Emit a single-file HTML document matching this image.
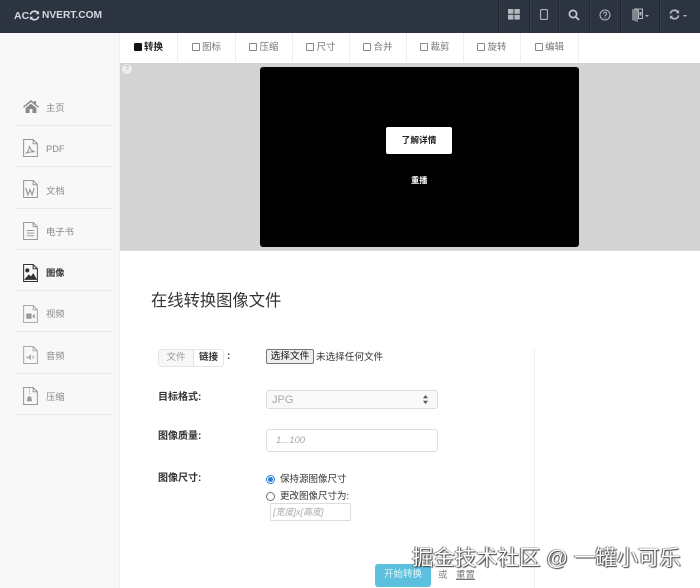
<!DOCTYPE html>
<html lang="zh">
<head>
<meta charset="utf-8">
<title>Aconvert</title>
<style>
html,body{margin:0;padding:0;background:#fff;}
body{width:700px;height:588px;position:relative;overflow:hidden;font-family:"Liberation Sans","Noto Sans CJK SC",sans-serif;color:#333;font-size:10px;}
#wrap{position:absolute;left:0;top:0;width:700px;height:588px;filter:blur(.35px);}
.a{position:absolute;white-space:nowrap;}
#nav{left:0;top:0;width:700px;height:33px;background:#2b3440;}
.sep{position:absolute;top:0;width:1px;height:33px;background:#1f2630;box-shadow:1px 0 0 #343e4b;}
#side{left:0;top:33px;width:120px;height:555px;background:#f8f8f8;border-right:1px solid #eee;box-sizing:border-box;}
.line{position:absolute;left:15px;width:97px;height:1px;background:#e8e8e8;}
.mi{position:absolute;left:46px;font-size:9.3px;color:#888;line-height:12px;}
.ic{position:absolute;left:22px;}
#tabs{left:120px;top:33px;width:580px;height:30px;background:#fff;}
.tab{position:absolute;top:0;height:29px;border-right:1px solid #eee;box-sizing:border-box;font-size:9.5px;color:#777;line-height:29px;text-align:center;}
.tab i{display:inline-block;width:6px;height:6px;border:1px solid #888;border-radius:1px;margin-right:2px;vertical-align:-0.5px;}
.tab.on{color:#222;font-weight:bold;}
.tab.on i{background:#111;border-color:#111;}
#gray{left:120px;top:63px;width:580px;height:188px;background:#d3d3d3;border-bottom:1px solid #ddd;box-sizing:border-box;}
#ad{left:260px;top:67px;width:319px;height:180px;background:#000;border-radius:3px;}
#btn{left:386px;top:127px;width:66px;height:27px;background:#fff;border-radius:2px;color:#222;font-size:8.7px;font-weight:bold;text-align:center;line-height:27px;}
.lb{font-size:10px;color:#333;font-weight:bold;line-height:13px;}
.inp{border:1px solid #ddd;box-sizing:border-box;border-radius:3px;background:#fff;}
</style>
</head>
<body>
<div id="wrap">
<div class="a" id="nav">
  <div class="a" style="left:14px;top:9px;color:#d5d9de;font-size:10.5px;font-weight:bold;line-height:14px;">AC</div>
  <svg class="a" style="left:29px;top:10px" width="11" height="11" viewBox="0 0 12 12" fill="none" stroke="#d5d9de" stroke-width="1.8"><path d="M1.5 5A4.6 4.6 0 0 1 9.8 3.4"/><path d="M10.5 7A4.6 4.600 0 0 1 2.2 8.6"/><path d="M11 1v3.6H7.5z" fill="#d5d9de" stroke="none"/><path d="M1 11V7.4h3.5z" fill="#d5d9de" stroke="none"/></svg>
  <div class="a" style="left:42px;top:9px;color:#d5d9de;font-size:10.2px;font-weight:bold;line-height:14px;">NVERT.COM</div>
  <div class="sep" style="left:498px"></div><div class="sep" style="left:529px"></div><div class="sep" style="left:558px"></div><div class="sep" style="left:589px"></div><div class="sep" style="left:620px"></div><div class="sep" style="left:659px"></div>
  <svg class="a" style="left:508px;top:9px" width="12" height="11" viewBox="0 0 12 11" fill="#b5bac0"><rect x="0" y="0" width="5.4" height="4.8"/><rect x="6.4" y="0" width="5.4" height="4.8"/><rect x="0" y="5.8" width="5.4" height="4.8"/><rect x="6.4" y="5.8" width="5.4" height="4.8"/></svg>
  <svg class="a" style="left:540px;top:9px" width="8" height="11" viewBox="0 0 8 11" fill="none" stroke="#b5bac0" stroke-width="1.1"><rect x=".6" y=".6" width="6.8" height="9.8" rx="1"/></svg>
  <svg class="a" style="left:568px;top:9px" width="12" height="12" viewBox="0 0 12 12" fill="none" stroke="#c5c9ce" stroke-width="1.7"><circle cx="5" cy="5" r="3.6"/><path d="M7.6 7.6L11 11"/></svg>
  <svg class="a" style="left:599px;top:9px" width="12" height="12" viewBox="0 0 12 12" fill="none" stroke="#b5bac0" stroke-width="1"><circle cx="6" cy="6" r="5"/><path d="M4.4 4.8a1.6 1.6 0 1 1 2.4 1.4c-.6.4-.8.6-.8 1.2"/><path d="M6 8.4v1"/></svg>
  <svg class="a" style="left:632px;top:8px" width="11" height="14" viewBox="0 0 11 14" fill="#7f868e"><path d="M0 1l6 1.500V14L0 12z"/><path d="M2 1h8.500v9.500H6.500V2.500z" fill="none" stroke="#b5bac0"/><path d="M7.500 4h2v3.500h-2z" fill="#b5bac0"/></svg>
  <div class="a" style="left:645px;top:15px;width:0;height:0;border:2px solid transparent;border-top-color:#b5bac0;"></div>
  <svg class="a" style="left:669px;top:9px" width="11" height="11" viewBox="0 0 12 12" fill="none" stroke="#b5bac0" stroke-width="1.8"><path d="M1.5 5A4.6 4.6 0 0 1 9.8 3.4"/><path d="M10.5 7A4.6 4.600 0 0 1 2.2 8.6"/><path d="M11 1v3.6H7.5z" fill="#b5bac0" stroke="none"/><path d="M1 11V7.4h3.5z" fill="#b5bac0" stroke="none"/></svg>
  <div class="a" style="left:683px;top:15px;width:0;height:0;border:2px solid transparent;border-top-color:#b5bac0;"></div>
</div>

<div class="a" id="side"></div>
<svg class="a ic" style="top:100px;left:23px" width="16" height="13" viewBox="0 0 16 13" fill="#8a8a8a"><path d="M8 0L0 6.6l1 1L8 2l7 5.6 1-1-3-2.4V1h-2v1.600z"/><path d="M2.600 8L8 3.600 13.400 8v5H9.400V9H6.600v4H2.600z"/></svg>
<div class="a mi" style="top:102px">主页</div><div class="a line" style="top:125px"></div>
<svg class="a ic" style="top:139px" width="17" height="18" viewBox="0 0 16 17" fill="none" stroke="#999"><path d="M1.500.5h9l4 4v12h-13z"/><path d="M10.500.5v4h4"/><path d="M3.500 13.500c2-1 3.500-4.500 3.500-7 .5 3 2 5 5 5.500-3 0-6 .5-8.500 1.500z"/></svg>
<div class="a mi" style="top:143px">PDF</div><div class="a line" style="top:166px"></div>
<svg class="a ic" style="top:180px" width="17" height="18" viewBox="0 0 16 17" fill="none" stroke="#999"><path d="M1.500.5h9l4 4v12h-13z"/><path d="M10.500.5v4h4"/><path d="M3.500 7.500l2 6.500 2-5 2 5 2-6.500" stroke-width="1.100"/></svg>
<div class="a mi" style="top:185px">文档</div><div class="a line" style="top:208px"></div>
<svg class="a ic" style="top:222px" width="17" height="18" viewBox="0 0 16 17" fill="none" stroke="#999"><path d="M1.500.5h9l4 4v12h-13z"/><path d="M10.500.5v4h4"/><path d="M4.500 8h7M4.500 10.500h7M4.500 13h7"/></svg>
<div class="a mi" style="top:226px">电子书</div><div class="a line" style="top:249px"></div>
<svg class="a ic" style="top:264px" width="17" height="18" viewBox="0 0 16 17" fill="none" stroke="#333"><path d="M1.500.5h9l4 4v12h-13z"/><path d="M10.500.5v4h4"/><circle cx="5" cy="6" r="1.500" fill="#333"/><path d="M3 14.500l3.500-4 2 2 2-3 3 5z" fill="#333"/></svg>
<div class="a mi" style="top:267px;color:#333;font-weight:bold">图像</div><div class="a line" style="top:290px"></div>
<svg class="a ic" style="top:305px" width="17" height="18" viewBox="0 0 16 17" fill="none" stroke="#aaa"><path d="M1.500.5h9l4 4v12h-13z"/><path d="M10.500.5v4h4"/><rect x="4" y="8" width="5" height="5" fill="#999" stroke="none"/><path d="M9.500 10.500l2.500-2v4.500z" fill="#999" stroke="none"/></svg>
<div class="a mi" style="top:308px">视频</div><div class="a line" style="top:331px"></div>
<svg class="a ic" style="top:346px" width="17" height="18" viewBox="0 0 16 17" fill="none" stroke="#aaa"><path d="M1.500.5h9l4 4v12h-13z"/><path d="M10.500.5v4h4"/><path d="M4 10h2l2.500-2.500v6L6 11.500H4z" fill="#aaa" stroke="none"/><path d="M10 9c.8 1 .8 2 0 3"/></svg>
<div class="a mi" style="top:350px">音频</div><div class="a line" style="top:373px"></div>
<svg class="a ic" style="top:387px" width="17" height="18" viewBox="0 0 16 17" fill="none" stroke="#999"><path d="M1.500.5h9l4 4v12h-13z"/><path d="M10.500.5v4h4"/><path d="M7 1.500v6" stroke-dasharray="1 1"/><path d="M5.500 9h3l1 4.500h-5z" fill="#999" stroke="none"/></svg>
<div class="a mi" style="top:391px">压缩</div><div class="a line" style="top:414px"></div>

<div class="a" id="tabs">
  <div class="tab on" style="left:0;width:58px"><i></i>转换</div>
  <div class="tab" style="left:58px;width:58px"><i></i>图标</div>
  <div class="tab" style="left:116px;width:57px"><i></i>压缩</div>
  <div class="tab" style="left:173px;width:57px"><i></i>尺寸</div>
  <div class="tab" style="left:230px;width:57px"><i></i>合并</div>
  <div class="tab" style="left:287px;width:57px"><i></i>裁剪</div>
  <div class="tab" style="left:344px;width:57px"><i></i>旋转</div>
  <div class="tab" style="left:401px;width:58px"><i></i>编辑</div>
</div>
<div class="a" id="gray"></div>
<div class="a" style="left:122px;top:64px;width:10px;height:10px;border-radius:50%;background:#eee;color:#aaa;font-size:7px;line-height:10px;text-align:center;">?</div>
<div class="a" id="ad"></div>
<div class="a" id="btn">了解详情</div>
<div class="a" style="left:411px;top:175px;color:#fff;font-size:8.2px;font-weight:bold;line-height:12px;">重播</div>

<div class="a" style="left:151px;top:291px;font-size:16.3px;color:#333;line-height:21px;">在线转换图像文件</div>
<div class="a" style="left:534px;top:350px;width:1px;height:238px;background:#eee;"></div>

<div class="a" style="left:158px;top:349px;width:66px;height:18px;border:1px solid #e5e5e5;box-sizing:border-box;border-radius:3px;background:#fff;"></div>
<div class="a" style="left:159px;top:350px;width:34px;height:16px;background:#f7f7f7;border-right:1px solid #e5e5e5;color:#999;font-size:9.5px;line-height:15px;text-align:center;">文件</div>
<div class="a" style="left:199px;top:351px;color:#333;font-size:9.5px;font-weight:bold;line-height:13px;">链接</div>
<div class="a lb" style="left:227px;top:350px;">:</div>
<div class="a" style="left:266px;top:349px;width:48px;height:15px;background:#efefef;border:1px solid #767676;box-sizing:border-box;border-radius:2px;color:#111;font-size:9.7px;line-height:13.5px;text-align:center;">选择文件</div>
<div class="a" style="left:316px;top:351px;color:#333;font-size:9.6px;line-height:13px;">未选择任何文件</div>

<div class="a lb" style="left:158px;top:391px;">目标格式:</div>
<div class="a inp" style="left:266px;top:390px;width:172px;height:19px;background:#f9f9f9;color:#aaa;font-size:11px;line-height:18px;padding-left:5px;">JPG</div>
<svg class="a" style="left:423px;top:395px" width="5" height="9" viewBox="0 0 5 9" fill="#555"><path d="M2.500 0L5 3.200H0zM2.500 9L0 5.800h5z"/></svg>

<div class="a lb" style="left:158px;top:430px;">图像质量:</div>
<div class="a inp" style="left:266px;top:429px;width:172px;height:23px;color:#aaa;font-size:9.500px;font-style:italic;line-height:21px;padding-left:9px;">1...100</div>

<div class="a lb" style="left:158px;top:472px;">图像尺寸:</div>
<div class="a" style="left:266px;top:475px;width:9px;height:9px;border:1px solid #2a7fd0;box-sizing:border-box;border-radius:50%;background:#fff;"></div>
<div class="a" style="left:268px;top:477px;width:5px;height:5px;border-radius:50%;background:#2a7fd0;"></div>
<div class="a" style="left:280px;top:473px;color:#333;font-size:9.5px;line-height:13px;">保持源图像尺寸</div>
<div class="a" style="left:266px;top:492px;width:9px;height:9px;border:1px solid #767676;box-sizing:border-box;border-radius:50%;background:#fff;"></div>
<div class="a" style="left:280px;top:490px;color:#333;font-size:9.5px;line-height:13px;">更改图像尺寸为:</div>
<div class="a inp" style="left:270px;top:503px;width:81px;height:18px;border-radius:1px;color:#aaa;font-size:9px;font-style:italic;line-height:17px;padding-left:2px;">[宽度]x[高度]</div>

<div class="a" style="left:375px;top:564px;width:56px;height:23px;background:#5bc0de;border-radius:3px;color:#e8f7fb;font-size:9.500px;line-height:22px;text-align:center;">开始转换</div>
<div class="a" style="left:438px;top:569px;color:#888;font-size:9.500px;line-height:13px;">或</div>
<div class="a" style="left:456px;top:569px;color:#777;font-size:9.500px;line-height:13px;text-decoration:underline;">重置</div>
</div>
<div class="a" style="left:412px;top:546px;color:#fff;font-size:21.4px;line-height:24px;text-shadow:0 0 1px #333,1px 1px 1px #444,-1px 0 1px #666;">掘金技术社区 @ 一罐小可乐</div>
</body>
</html>
